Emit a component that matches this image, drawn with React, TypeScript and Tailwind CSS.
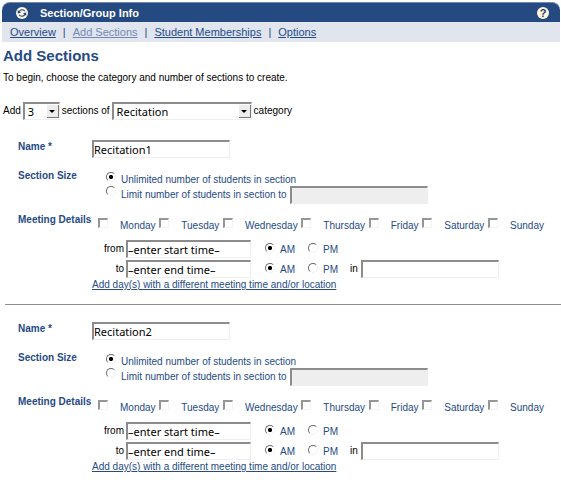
import React from "react";

const DAYS = ["Monday", "Tuesday", "Wednesday", "Thursday", "Friday", "Saturday", "Sunday"];

const FIELD =
  "h-[18px] rounded-none border-t-2 border-l-2 border-r border-b border-t-[#8c8c8c] border-l-[#8c8c8c] border-r-[#efefef] border-b-[#efefef] bg-white disabled:bg-[#eeeeee] font-['Noto_Sans','DejaVu_Sans',sans-serif] text-[11px] leading-[14px] text-black outline-none";

const LINK = "text-[#254a86] underline underline-offset-1";

function Radio({ id, name, checked }: { id: string; name: string; checked?: boolean }) {
  return (
    <input
      type="radio"
      id={id}
      name={name}
      defaultChecked={checked}
      className="size-[10px] shrink-0 appearance-none rounded-full border border-t-[#6a6a6a] border-l-[#6a6a6a] border-r-[#f1f1f1] border-b-[#f1f1f1] bg-white checked:bg-[radial-gradient(circle,#000_32%,transparent_42%)]"
    />
  );
}

function Select({ label, value, options, width }: { label: string; value: string; options: string[]; width: string }) {
  return (
    <span className={`relative inline-flex ${width}`}>
      <select aria-label={label} defaultValue={value} className={`${FIELD} w-full appearance-none pl-[3px]`}>
        {options.map((o) => (
          <option key={o}>{o}</option>
        ))}
      </select>
      <span className="pointer-events-none absolute top-[3px] right-px flex h-[13px] w-[12px] items-center justify-center border-r border-b border-[#777777] bg-[#ededed]">
        <svg width="6" height="3" viewBox="0 0 6 3" aria-hidden="true">
          <path d="M0 0H6L3 3Z" fill="#000" />
        </svg>
      </span>
    </span>
  );
}

function TimeRow({ id, word, value, place }: { id: string; word: string; value: string; place?: boolean }) {
  return (
    <div className="flex items-center">
      <label htmlFor={id} className="w-[34px] pr-[2px] text-right text-black">
        {word}
      </label>
      <input id={id} type="text" defaultValue={value} className={`${FIELD} w-[125px]`} />
      <div className="ml-[14px] flex h-[18px] items-start gap-[5px] pt-[3px]">
        <Radio id={`${id}-am`} name={`${id}-half`} checked />
        <label htmlFor={`${id}-am`} className="w-[23px]">
          AM
        </label>
        <Radio id={`${id}-pm`} name={`${id}-half`} />
        <label htmlFor={`${id}-pm`} className="w-[20px]">
          PM
        </label>
      </div>
      {place && (
        <>
          <label htmlFor={`${id}-place`} className="w-[18px] pl-[7px] text-black">
            in
          </label>
          <input id={`${id}-place`} type="text" className={`${FIELD} w-[138px]`} />
        </>
      )}
    </div>
  );
}

function SectionForm({ n }: { n: number }) {
  const id = `section-${n}`;
  return (
    <section className="pl-[18px] text-[10px] leading-[14px] whitespace-nowrap text-[#254a86]">
      <div className="flex">
        <label htmlFor={`${id}-name`} className="w-[74px] font-bold">
          Name *
        </label>
        <input id={`${id}-name`} type="text" defaultValue={`Recitation${n}`} className={`${FIELD} w-[138px]`} />
      </div>

      <div className="mt-[11px] flex" role="group" aria-labelledby={`${id}-size`}>
        <span id={`${id}-size`} className="w-[74px] font-bold">
          Section Size
        </span>
        <div className="pt-[3px] pl-[14px]">
          <div className="flex h-[14px] gap-[5px]">
            <Radio id={`${id}-unlimited`} name={`${id}-limit`} checked />
            <label htmlFor={`${id}-unlimited`} className="pt-px">
              Unlimited number of students in section
            </label>
          </div>
          <div className="flex">
            <Radio id={`${id}-limited`} name={`${id}-limit`} />
            <label htmlFor={`${id}-limited`} className="w-[174px] pt-[2px] pl-[5px]">
              Limit number of students in section to
            </label>
            <input
              type="text"
              disabled
              aria-label="Maximum number of students"
              className={`${FIELD} w-[138px]`}
            />
          </div>
        </div>
      </div>

      <div className="mt-[9px] flex" role="group" aria-labelledby={`${id}-meeting`}>
        <span id={`${id}-meeting`} className="w-[74px] font-bold">
          Meeting Details
        </span>
        <div className="flex flex-col gap-[2px]">
          <div className="mb-[5px] ml-[6px] flex w-[446px] justify-between pt-[5px]">
            {DAYS.map((day) => (
              <div key={day} className="flex gap-[12px]">
                <input
                  id={`${id}-${day}`}
                  type="checkbox"
                  className="size-[10px] appearance-none rounded-none border-t-2 border-l-2 border-r border-b border-t-[#969696] border-l-[#969696] border-r-[#f3f3f3] border-b-[#f3f3f3] bg-white checked:bg-[#254a86]"
                />
                <label htmlFor={`${id}-${day}`} className="pt-px">
                  {day}
                </label>
              </div>
            ))}
          </div>
          <TimeRow id={`${id}-start`} word="from" value="–enter start time–" />
          <TimeRow id={`${id}-end`} word="to" value="–enter end time–" place />
        </div>
      </div>
      <a href="#" className={`ml-[74px] block w-fit ${LINK}`}>
        Add day(s) with a different meeting time and/or location
      </a>
    </section>
  );
}

export default function App() {
  return (
    <main className="bg-white pt-[2px] font-['Liberation_Sans',Arial,sans-serif] text-[10px] leading-[14px] text-black">
      <header className="mr-px ml-[2px] flex h-5 items-center rounded-t-lg border-t border-[#6f8bb5] bg-[#254a82] pr-[11px] pl-[14px] text-white">
        <svg width="12" height="12" viewBox="0 0 12 12" aria-hidden="true">
          <circle cx="6" cy="6" r="6" fill="#fbf6e4" />
          <path d="M8.8 4.2A3.2 3.2 0 0 0 3.2 4.6M3.2 7.8A3.2 3.2 0 0 0 8.8 7.4" fill="none" stroke="#1d3d70" strokeWidth="1.2" />
          <path d="M1.8 3.2V6.4L5 5.6ZM10.2 8.8V5.6L7 6.4Z" fill="#1d3d70" />
        </svg>
        <span className="ml-3 flex-1 text-[11px] font-bold">Section/Group Info</span>
        <button
          type="button"
          aria-label="Help"
          className="flex size-3 items-center justify-center rounded-full bg-[#fdf5dc] text-[11px] leading-3 font-bold text-[#1d3d70]"
        >
          ?
        </button>
      </header>

      <nav className="mr-px ml-[2px] flex h-5 items-center gap-[7px] bg-[#e0e5ee] pl-2 text-[11px] text-[#254a86]">
        <a href="#" className={LINK}>Overview</a>
        <span>|</span>
        <a href="#" className="text-[#7189b4] underline underline-offset-1">Add Sections</a>
        <span>|</span>
        <a href="#" className={LINK}>Student Memberships</a>
        <span>|</span>
        <a href="#" className={LINK}>Options</a>
      </nav>

      <h1 className="mt-1 pl-[3px] text-[15px] leading-5 font-bold text-[#254a86]">Add Sections</h1>
      <p className="mt-[5px] pl-[3px]">To begin, choose the category and number of sections to create.</p>

      <div className="mt-[17px] mb-5 flex items-center gap-[2px] pl-[3px] whitespace-nowrap">
        <span>Add</span>
        <Select label="Number of sections" value="3" options={["1", "2", "3", "4", "5"]} width="w-[37px]" />
        <span>sections of</span>
        <Select label="Category" value="Recitation" options={["Recitation", "Lecture", "Lab"]} width="w-[140px]" />
        <span>category</span>
      </div>

      <SectionForm n={1} />
      <hr className="mt-3 mb-[17px] ml-[5px] border-t border-[#8c8c8c]" />
      <SectionForm n={2} />
    </main>
  );
}
